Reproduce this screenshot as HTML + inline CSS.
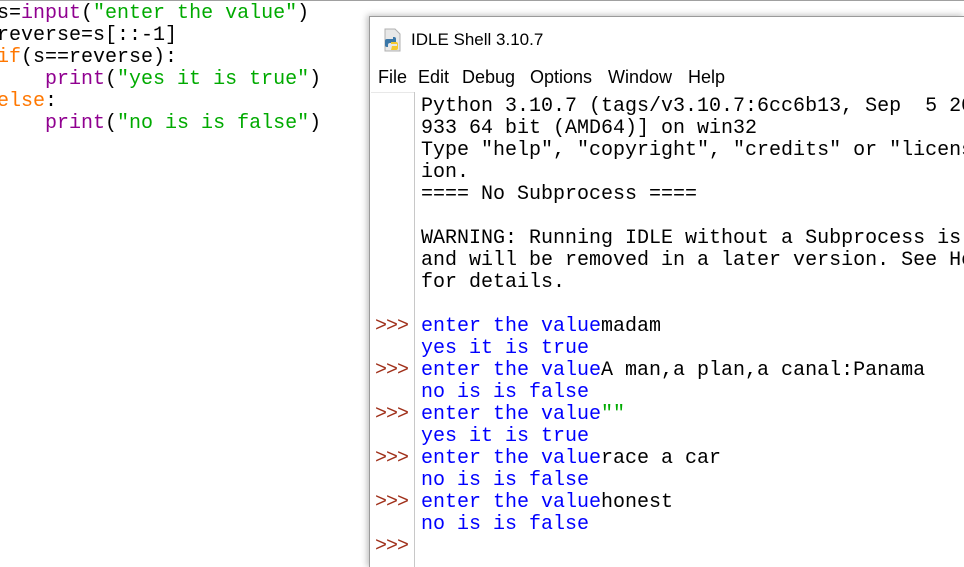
<!DOCTYPE html>
<html><head><style>
html,body{margin:0;padding:0;width:964px;height:567px;overflow:hidden;background:#fff;position:relative}
.mono{font-family:"Liberation Mono",monospace;font-size:20px;line-height:22px;white-space:pre}
#ed{position:absolute;left:-3px;top:3px;color:#000}
.k{color:#ff7700}.b{color:#900090}.s{color:#00aa00}
#topline{position:absolute;left:0;top:0;width:964px;height:1px;background:#a0a0a0}
#win{position:absolute;left:369px;top:16px;width:595px;height:551px;overflow:hidden;background:#fff;border-left:1px solid #9a9a9a;border-top:1px solid #9a9a9a;box-shadow:-2px -1px 6px rgba(0,0,0,.25)}
#title{position:absolute;left:41px;top:13px;font-family:"Liberation Sans",sans-serif;font-size:17px;color:#000}
.m{position:absolute;top:50px;font-family:"Liberation Sans",sans-serif;font-size:18px;color:#000;white-space:pre}
#gut{position:absolute;left:1px;top:75px;width:43px;height:490px;background:#fff;border-top:1px solid #e8e8e8}
#sep{position:absolute;left:44px;top:75px;width:1px;height:490px;background:#c8c8c8}
#sh{position:absolute;left:51px;top:79px;color:#000}
#pr{position:absolute;left:5px;top:299px;color:#a0301a;letter-spacing:-1px}
.o{color:#0000ff}.g{color:#00aa00}
</style></head><body>
<div id="topline"></div>
<div id="ed" class="mono">s=<span class="b">input</span>(<span class="s">"enter the value"</span>)
reverse=s[::-1]
<span class="k">if</span>(s==reverse):
    <span class="b">print</span>(<span class="s">"yes it is true"</span>)
<span class="k">else</span>:
    <span class="b">print</span>(<span class="s">"no is is false"</span>)</div>
<div id="win">
<svg style="position:absolute;left:13px;top:11px" width="20" height="24" viewBox="0 0 20 24">
<path d="M2 1h10l5 5v17H2z" fill="#e8e8e8" stroke="#b0b0b0"/>
<path d="M6 9h5a2 2 0 0 1 2 2v4H7a2 2 0 0 0-2 2v2H4a2 2 0 0 1-2-2v-4a2 2 0 0 1 2-2h6V9" fill="#3b77a8"/>
<path d="M8 22h5a2 2 0 0 0 2-2v-4a2 2 0 0 0-2-2H8v2h6v2H9" fill="#f5c92e"/>
</svg>
<div id="title">IDLE Shell 3.10.7</div>
<div class="m" style="left:8px">File</div>
<div class="m" style="left:48px">Edit</div>
<div class="m" style="left:92px">Debug</div>
<div class="m" style="left:160px">Options</div>
<div class="m" style="left:238px">Window</div>
<div class="m" style="left:318px">Help</div>
<div id="gut"></div><div id="sep"></div>
<div id="sh" class="mono">Python 3.10.7 (tags/v3.10.7:6cc6b13, Sep  5 2022, 14:08:36) [MSC v.
933 64 bit (AMD64)] on win32
Type "help", "copyright", "credits" or "license()" for more informat
ion.
==== No Subprocess ====

WARNING: Running IDLE without a Subprocess is deprecated
and will be removed in a later version. See Help/IDLE Help
for details.

<span class="o">enter the value</span>madam
<span class="o">yes it is true</span>
<span class="o">enter the value</span>A man,a plan,a canal:Panama
<span class="o">no is is false</span>
<span class="o">enter the value</span><span class="g">""</span>
<span class="o">yes it is true</span>
<span class="o">enter the value</span>race a car
<span class="o">no is is false</span>
<span class="o">enter the value</span>honest
<span class="o">no is is false</span>
</div>
<div id="pr" class="mono">&gt;&gt;&gt;

&gt;&gt;&gt;

&gt;&gt;&gt;

&gt;&gt;&gt;

&gt;&gt;&gt;

&gt;&gt;&gt;</div>
</div>
</body></html>
